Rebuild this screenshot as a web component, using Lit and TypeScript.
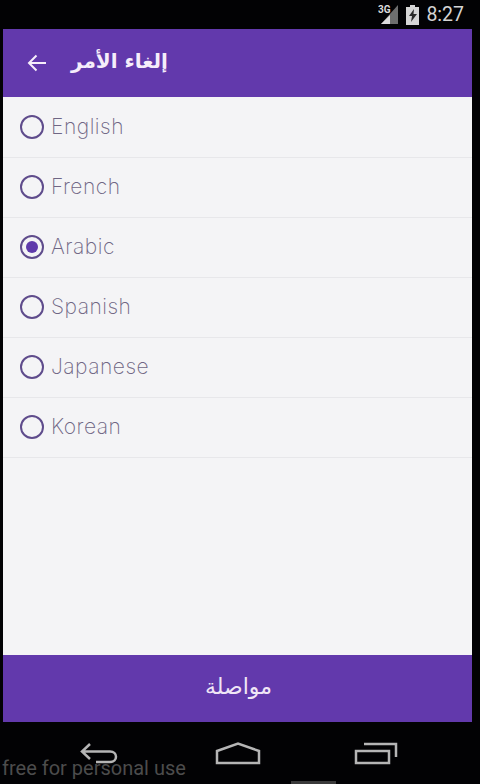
import { LitElement, html, css } from "lit";
import { customElement, state } from "lit/decorators.js";

const LANGS = ["English", "French", "Arabic", "Spanish", "Japanese", "Korean"];

@customElement("app-root")
export class AppRoot extends LitElement {
  @state() selected = "Arabic";

  static styles = css`
    :host { display: block; width: 480px; height: 784px; background: #020204; position: relative; overflow: hidden; font-family: "Inter", sans-serif; }
    .page { height: 100%; display: flex; flex-direction: column; }
    .status { height: 29px; flex: none; display: flex; align-items: center; justify-content: flex-end; padding: 0 16px 0 0; gap: 7px; color: #d4d4d4; font: 19.5px "Roboto", sans-serif; }
    .status svg { display: block; }
    .main { flex: none; height: 693px; margin: 0 8px 0 3px; display: flex; flex-direction: column; background: #f4f4f6; }
    .bar { height: 68px; flex: none; background: #6239ac; color: #f6eefb; display: flex; align-items: center; padding: 0 0 0 24px; }
    .bar svg { display: block; flex: none; }
    .title { margin-left: 24px; font: bold 20px "DejaVu Sans", sans-serif; line-height: 1; transform: translateY(-2px); }
    .list { flex: 1; display: flex; flex-direction: column; padding-top: 1px; }
    .row { height: 59px; flex: none; box-sizing: content-box; border-bottom: 1px solid #e7e7ea; display: flex; align-items: center; padding-left: 17px; gap: 7px; color: #6f6684; font-size: 21px; font-weight: 200; letter-spacing: 0.5px; }
    .row .label { transform: translateY(-1px); }
    .radio { width: 24px; height: 24px; border-radius: 50%; border: 2.500px solid #5f4c8c; box-sizing: border-box; display: flex; align-items: center; justify-content: center; flex: none; transform: translateY(-1px); }
    .radio.on::after { content: ""; width: 12px; height: 12px; border-radius: 50%; background: #5f3bab; }
    .go { height: 67px; flex: none; background: #6239ac; color: #f0e6f6; display: flex; align-items: center; justify-content: center; font: 22px "DejaVu Sans", sans-serif; }
    .go span { transform: translate(1px, -2px); }
    .nav { flex: 1; display: flex; align-items: flex-start; padding: 0 0 0 80px; color: #b5b5b5; }
    .nav svg { display: block; margin-top: 20px; }
    .nav .home { margin-left: 93px; }
    .nav .recent { margin-left: 93px; }
    .wm { position: absolute; left: 2px; top: 756px; color: #4c4c4c; font: 20px "Roboto", sans-serif; line-height: 24px; white-space: nowrap; }
    .dash { position: absolute; left: 291px; top: 781px; width: 45px; height: 3px; background: #3a3a3a; }
  `;

  render() {
    return html`
      <div class="page">
        <div class="status">
          <svg width="21" height="23" viewBox="0 0 21 23">
            <path d="M20 2v19H3z" fill="#6e6e6e" />
            <path d="M12 12v9H3z" fill="#dcdcdc" />
            <text x="0" y="10" font-size="10" font-weight="700" font-family="Roboto" fill="#dcdcdc">3G</text>
          </svg>
          <svg width="13" height="20" viewBox="0 0 13 20">
            <path d="M4 0h5v2h4v18H0V2h4z" fill="#d6d6d6" />
            <path d="M8 4 3 11h3l-1 6 6-8H7.500z" fill="#2a2a2a" />
          </svg>
          <span>8:27</span>
        </div>
        <div class="main">
          <div class="bar">
            <svg width="20" height="18" viewBox="0 0 20 18" fill="none" stroke="#f6eefb" stroke-width="2">
              <path d="M19 9H2M9.500 1.500 2 9l7.500 7.500" />
            </svg>
            <span class="title" dir="rtl">إلغاء الأمر</span>
          </div>
          <div class="list">
            ${LANGS.map(
              (l) => html`<div class="row">
                <span class="radio ${l === this.selected ? "on" : ""}"></span>
                <span class="label">${l}</span>
              </div>`
            )}
          </div>
          <div class="go"><span dir="rtl">مواصلة</span></div>
        </div>
        <div class="nav">
          <svg width="42" height="24" viewBox="0 0 42 24" fill="none" stroke="#b5b5b5" stroke-width="2.500">
            <path d="M10 2 2 9.500l8 7.500M2 9.500h28c8 0 8 10.500 0 10.500H16" />
          </svg>
          <svg class="home" width="46" height="24" viewBox="0 0 46 24" fill="none" stroke="#b5b5b5" stroke-width="2.500">
            <path d="M2 9 23 1.500l21 7.500V21H2z" />
          </svg>
          <svg class="recent" width="44" height="24" viewBox="0 0 44 24" fill="none" stroke="#b5b5b5" stroke-width="2.500">
            <path d="M2 9h33v12H2zM10 2h32v13" />
          </svg>
        </div>
      </div>
      <div class="wm">free for personal use</div>
      <div class="dash"></div>
    `;
  }
}
